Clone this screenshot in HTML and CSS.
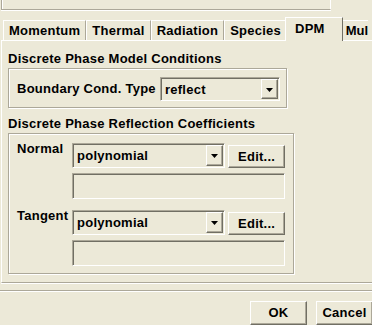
FILE: index.html
```html
<!DOCTYPE html>
<html lang="en">
<head>
    <meta charset="UTF-8">
    <title>Boundary Conditions - DPM</title>
    <link rel="stylesheet" href="styles.css">
</head>
<body>
    <div class="top-frame"></div>

    <div class="tabs">
        <div class="tab">Momentum</div>
        <div class="tab">Thermal</div>
        <div class="tab">Radiation</div>
        <div class="tab">Species</div>
        <div class="tab active">DPM</div>
        <div class="tab last">Mul</div>
    </div>

    <div class="panel">
        <div class="group-title">Discrete Phase Model Conditions</div>
        <div class="group cond-box">
            <span class="cond-label">Boundary Cond. Type</span>
            <div class="combo cond-combo">
                <span class="combo-text">reflect</span>
                <span class="arrow-btn">
                    <svg width="7" height="4" viewBox="0 0 7 4"><polygon points="0,0 7,0 3.5,4" fill="#000"/></svg>
                </span>
            </div>
        </div>

        <div class="group-title second">Discrete Phase Reflection Coefficients</div>
        <div class="group coef-box">
            <div class="coef-row">
                <span class="coef-label">Normal</span>
                <div class="fields">
                    <div class="combo-line">
                        <div class="combo coef-combo">
                            <span class="combo-text">polynomial</span>
                            <span class="arrow-btn">
                                <svg width="7" height="4" viewBox="0 0 7 4"><polygon points="0,0 7,0 3.5,4" fill="#000"/></svg>
                            </span>
                        </div>
                        <button class="btn edit-btn">Edit...</button>
                    </div>
                    <div class="textbox"></div>
                </div>
            </div>
            <div class="coef-row">
                <span class="coef-label">Tangent</span>
                <div class="fields">
                    <div class="combo-line">
                        <div class="combo coef-combo">
                            <span class="combo-text">polynomial</span>
                            <span class="arrow-btn">
                                <svg width="7" height="4" viewBox="0 0 7 4"><polygon points="0,0 7,0 3.5,4" fill="#000"/></svg>
                            </span>
                        </div>
                        <button class="btn edit-btn">Edit...</button>
                    </div>
                    <div class="textbox"></div>
                </div>
            </div>
        </div>
    </div>

    <div class="separator"></div>

    <div class="actions">
        <button class="btn">OK</button>
        <button class="btn">Cancel</button>
    </div>
</body>
</html>
```

FILE: styles.css
```css
* {
    margin: 0;
    padding: 0;
    box-sizing: border-box;
}

body {
    width: 372px;
    height: 325px;
    overflow: hidden;
    background: #ece9d8;
    color: #000;
    font-family: "Liberation Sans", Arial, sans-serif;
    font-size: 13px;
    font-weight: bold;
    letter-spacing: 0.25px;
}

.top-frame {
    width: 330px;
    height: 10px;
    margin-left: 1px;
    border-left: 1px solid #aca899;
    border-right: 1px solid #fff;
    border-bottom: 1px solid #aca899;
    box-shadow: inset 1px 0 #fff, 0 1px #fff;
}

/* tab strip */
.tabs {
    display: flex;
    align-items: flex-end;
    height: 23px;
    margin-top: 7px;
    padding-left: 3px;
    white-space: nowrap;
}

.tab {
    flex-shrink: 0;
    height: 20px;
    line-height: 19px;
    padding: 0 5px;
    border-top: 1px solid #fff;
    border-left: 1px solid #fff;
    border-right: 1px solid #aca899;
}

.tab.active {
    position: relative;
    z-index: 1;
    height: 24px;
    margin: 0 -1px -1px -2px;
    padding: 3px 17px 0 9px;
    line-height: 15px;
    background: #ece9d8;
    border-right-color: #716f64;
}

.tab.last {
    padding: 0 0 0 3px;
    letter-spacing: 0;
    border-right: none;
}

.panel {
    height: 243px;
    margin-left: 1px;
    padding: 10px 0 0 6px;
    border-top: 1px solid #fff;
    border-left: 1px solid #fff;
    border-bottom: 1px solid #aca899;
    box-shadow: 0 1px #fff;
}

/* group boxes */
.group-title {
    line-height: 15px;
    margin-bottom: 2px;
}

.group-title.second {
    margin-top: 8px;
}

.group {
    border: 1px solid #aca899;
    box-shadow: inset 1px 1px #fff, 1px 1px #fff;
}

.cond-box {
    width: 279px;
    height: 40px;
    display: flex;
    align-items: flex-start;
    justify-content: space-between;
    padding: 8px 6px 0 8px;
}

.cond-label {
    line-height: 24px;
}

.coef-box {
    width: 286px;
    height: 141px;
    padding: 9px 8px 0 8px;
}

.coef-row {
    display: flex;
}

.coef-row + .coef-row {
    margin-top: 11px;
}

.coef-label {
    width: 55px;
    line-height: 15px;
    margin-top: -2px;
}

.fields {
    width: 213px;
    display: flex;
    flex-direction: column;
    gap: 5px;
}

.combo-line {
    display: flex;
    align-items: flex-start;
}

/* combo boxes */
.combo {
    display: flex;
    align-items: stretch;
    padding: 1px 1px 1px 4px;
    border: 1px solid;
    border-color: #aca899 #fff #fff #aca899;
    box-shadow: inset 1px 1px #716f64;
}

.cond-combo {
    width: 120px;
    height: 24px;
}

.coef-combo {
    width: 154px;
    height: 25px;
}

.combo-text {
    display: flex;
    align-items: center;
}

.arrow-btn {
    width: 17px;
    margin-left: auto;
    display: flex;
    align-items: center;
    justify-content: center;
    padding-top: 1px;
    border: 1px solid;
    border-color: #fff #716f64 #716f64 #fff;
    box-shadow: inset -1px -1px #aca899;
}

.textbox {
    height: 26px;
    border: 1px solid;
    border-color: #aca899 #fff #fff #aca899;
    box-shadow: inset 1px 1px #716f64;
}

/* buttons */
.btn {
    width: 57px;
    height: 24px;
    padding: 0;
    font: inherit;
    letter-spacing: inherit;
    line-height: 20px;
    color: #000;
    text-align: center;
    background: #ece9d8;
    border: 1px solid;
    border-color: #fff #716f64 #716f64 #fff;
    box-shadow: inset -1px -1px #aca899;
}

.edit-btn {
    height: 23px;
    margin: 2px 0 0 3px;
}

.separator {
    margin-top: 7px;
    border-top: 1px solid #aca899;
    border-bottom: 1px solid #fff;
}

.actions {
    display: flex;
    justify-content: flex-end;
    gap: 9px;
    margin-top: 9px;
    margin-right: -1px;
}
```
